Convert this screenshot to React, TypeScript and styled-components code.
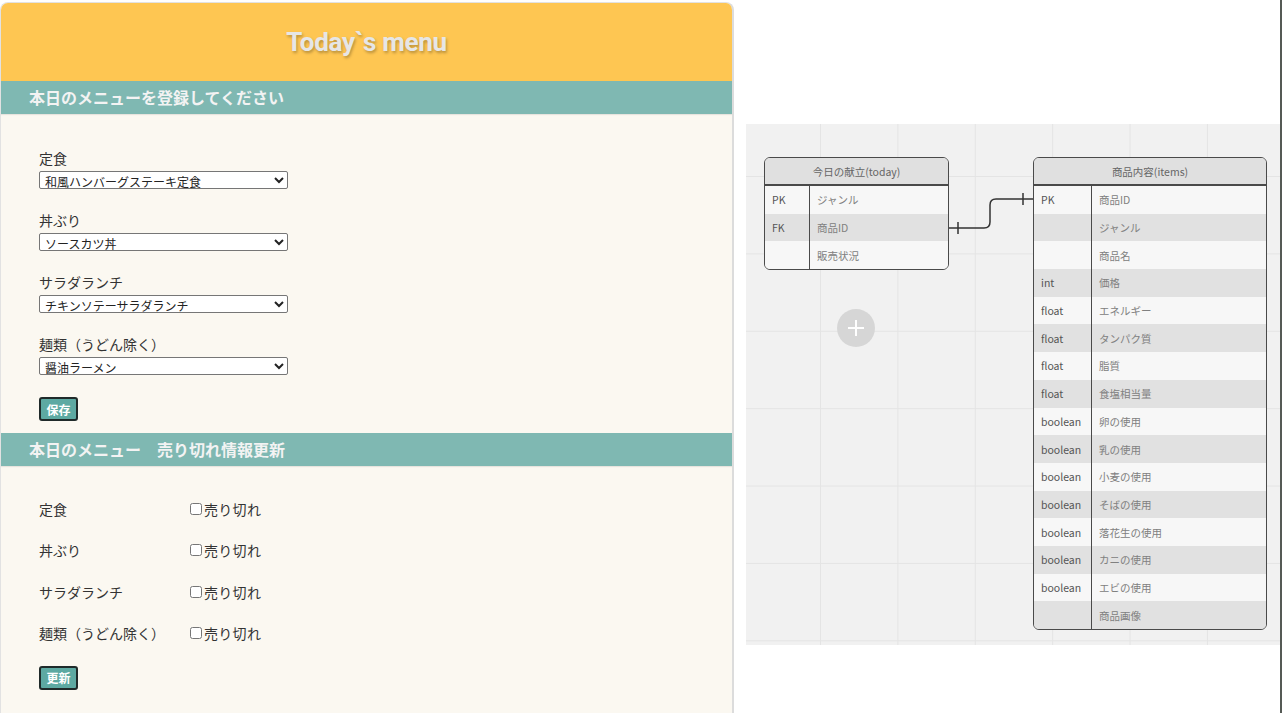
import React from "react";
import styled, { createGlobalStyle } from "styled-components";

const Global = createGlobalStyle`
  html, body { margin: 0; padding: 0; background: #ffffff; }
  body { font-family: "Noto Sans CJK JP", "Noto Sans", sans-serif; color: #333; overflow: hidden; }
  * { box-sizing: border-box; }
`;

const Page = styled.div`
  display: flex;
  align-items: flex-start;
  width: 1283px;
  height: 713px;
  overflow: hidden;
`;

const Panel = styled.div`
  width: 734px;
  flex: none;
  margin-top: 2px;
  min-height: 720px;
  background: #fbf8f1;
  border: 1px solid #e2e2e2;
  border-right: 2px solid #dcdcdc;
  border-radius: 8px 8px 0 0;
  overflow: hidden;
`;

const Header = styled.header`
  height: 78px;
  background: #fec652;
  display: flex;
  align-items: center;
  justify-content: center;
`;

const Title = styled.h1`
  margin: 0;
  font-family: Roboto, "Liberation Sans", sans-serif;
  font-weight: 700;
  font-size: 26px;
  color: #e6e6e6;
  text-shadow: 1px 2px 3px rgba(0, 0, 0, 0.28);
  letter-spacing: -0.3px;
`;

const SectionBar = styled.h2`
  margin: 0;
  height: 33px;
  background: #7fb8b2;
  color: #f3f3f3;
  font-size: 16px;
  font-weight: 700;
  line-height: 33px;
  padding-left: 28px;
  box-shadow: 0 1px 1px rgba(0, 0, 0, 0.08);
`;

const Form = styled.div<{ $top: number; $bottom: number }>`
  padding: ${(p) => p.$top}px 38px ${(p) => p.$bottom}px;
  display: flex;
  flex-direction: column;
`;

const FieldGroup = styled.div`
  display: flex;
  flex-direction: column;
  gap: 3px;
  margin-bottom: 21px;
`;

const Label = styled.label`
  font-size: 14px;
  line-height: 20px;
  color: #333;
`;

const Select = styled.select`
  width: 249px;
  height: 18px;
  font-family: "Noto Sans CJK JP", sans-serif;
  font-size: 12px;
  line-height: 14px;
  color: #222;
  background: #fff;
  border: 1px solid #767676;
  border-radius: 2px;
  padding: 0 1px;
`;

const Button = styled.button`
  align-self: flex-start;
  width: 39px;
  height: 24px;
  margin-top: 1px;
  padding: 0;
  background: #5da9a2;
  border: 2px solid #1f2a2a;
  border-radius: 3px;
  color: #fff;
  font-family: "Noto Sans CJK JP", sans-serif;
  font-weight: 700;
  font-size: 12px;
  line-height: 19px;
`;

const SoldRow = styled.div`
  display: grid;
  grid-template-columns: 151px auto;
  align-items: center;
  height: 20px;
  margin-bottom: 21.4px;
  font-size: 14px;
`;

const CheckLabel = styled.label`
  display: inline-flex;
  align-items: center;
  font-size: 14px;
  letter-spacing: 0.3px;
  color: #333;
  input {
    margin: 0 2px 0 0;
    width: 12px;
    height: 12px;
  }
`;

const Side = styled.div`
  flex: 1;
  height: 713px;
  padding-top: 124px;
  padding-left: 12px;
  border-right: 2px solid #555a55;
  margin-right: 1px;
`;

const Canvas = styled.div`
  position: relative;
  height: 521px;
  background-color: #f1f1f1;
  background-image: linear-gradient(to right, #e4e4e4 1px, transparent 1px),
    linear-gradient(to bottom, #e4e4e4 1px, transparent 1px);
  background-size: 77.4px 77.4px;
  background-position: 74px 52px;
`;

const Table = styled.div<{ $x: number; $w: number }>`
  position: absolute;
  left: ${(p) => p.$x}px;
  top: 33px;
  width: ${(p) => p.$w}px;
  border: 1.5px solid #4a4a4a;
  border-radius: 6px;
  overflow: hidden;
  background: #f7f7f7;
  font-family: "Noto Sans CJK JP", "Noto Sans", sans-serif;
  font-size: 10.5px;
`;

const TableHead = styled.div`
  height: 28px;
  background: #e0e0e0;
  border-bottom: 2px solid #4a4a4a;
  color: #666;
  display: flex;
  align-items: center;
  justify-content: center;
`;

const TableRow = styled.div<{ $alt: boolean; $key: number }>`
  display: grid;
  grid-template-columns: ${(p) => p.$key}px 1fr;
  height: 27.7px;
  background: ${(p) => (p.$alt ? "#e1e1e1" : "#f7f7f7")};
`;

const KeyCell = styled.div`
  display: flex;
  align-items: center;
  padding-left: 7px;
  color: #555;
  font-weight: 400;
  border-right: 1.5px solid #4a4a4a;
`;

const NameCell = styled.div`
  display: flex;
  align-items: center;
  padding-left: 7px;
  color: #808080;
`;

const Overlay = styled.svg`
  position: absolute;
  left: 0;
  top: 0;
  overflow: visible;
`;

const AddButton = styled.div`
  position: absolute;
  left: 91px;
  top: 185px;
  width: 38px;
  height: 38px;
  border-radius: 50%;
  background: #d6d6d6;
  display: flex;
  align-items: center;
  justify-content: center;
`;

type Row = [string, string];

const todayRows: Row[] = [
  ["PK", "ジャンル"],
  ["FK", "商品ID"],
  ["", "販売状況"],
];

const itemRows: Row[] = [
  ["PK", "商品ID"],
  ["", "ジャンル"],
  ["", "商品名"],
  ["int", "価格"],
  ["float", "エネルギー"],
  ["float", "タンパク質"],
  ["float", "脂質"],
  ["float", "食塩相当量"],
  ["boolean", "卵の使用"],
  ["boolean", "乳の使用"],
  ["boolean", "小麦の使用"],
  ["boolean", "そばの使用"],
  ["boolean", "落花生の使用"],
  ["boolean", "カニの使用"],
  ["boolean", "エビの使用"],
  ["", "商品画像"],
];

const fields = [
  { label: "定食", value: "和風ハンバーグステーキ定食" },
  { label: "丼ぶり", value: "ソースカツ丼" },
  { label: "サラダランチ", value: "チキンソテーサラダランチ" },
  { label: "麺類（うどん除く）", value: "醤油ラーメン" },
];

function ErTable({ x, w, keyW, title, rows }: { x: number; w: number; keyW: number; title: string; rows: Row[] }) {
  return (
    <Table $x={x} $w={w}>
      <TableHead>{title}</TableHead>
      {rows.map(([k, n], i) => (
        <TableRow key={n} $alt={i % 2 === 1} $key={keyW}>
          <KeyCell>{k}</KeyCell>
          <NameCell>{n}</NameCell>
        </TableRow>
      ))}
    </Table>
  );
}

export default function App() {
  return (
    <>
      <Global />
      <Page>
        <Panel>
          <Header>
            <Title>Today`s menu</Title>
          </Header>
          <SectionBar>本日のメニューを登録してください</SectionBar>
          <Form $top={34} $bottom={12}>
            {fields.map((f) => (
              <FieldGroup key={f.label}>
                <Label>{f.label}</Label>
                <Select defaultValue={f.value}>
                  <option>{f.value}</option>
                </Select>
              </FieldGroup>
            ))}
            <Button>保存</Button>
          </Form>
          <SectionBar>本日のメニュー　売り切れ情報更新</SectionBar>
          <Form $top={33} $bottom={20}>
            {fields.map((f) => (
              <SoldRow key={f.label}>
                <span>{f.label}</span>
                <CheckLabel>
                  <input type="checkbox" />
                  売り切れ
                </CheckLabel>
              </SoldRow>
            ))}
            <Button>更新</Button>
          </Form>
        </Panel>
        <Side>
          <Canvas>
            <ErTable x={18} w={185} keyW={45} title="今日の献立(today)" rows={todayRows} />
            <ErTable x={287} w={234} keyW={58} title="商品内容(items)" rows={itemRows} />
            <Overlay width="1" height="1">
              <path
                d="M203 104 H238 Q244 104 244 98 V81 Q244 75 250 75 H287"
                fill="none"
                stroke="#333"
                strokeWidth="1.5"
              />
              <path d="M212 98 V110 M277 69 V81" stroke="#333" strokeWidth="1.5" />
            </Overlay>
            <AddButton>
              <svg width="20" height="20" viewBox="0 0 20 20">
                <path d="M10 2 V18 M2 10 H18" stroke="#fff" strokeWidth="2" />
              </svg>
            </AddButton>
          </Canvas>
        </Side>
      </Page>
    </>
  );
}
